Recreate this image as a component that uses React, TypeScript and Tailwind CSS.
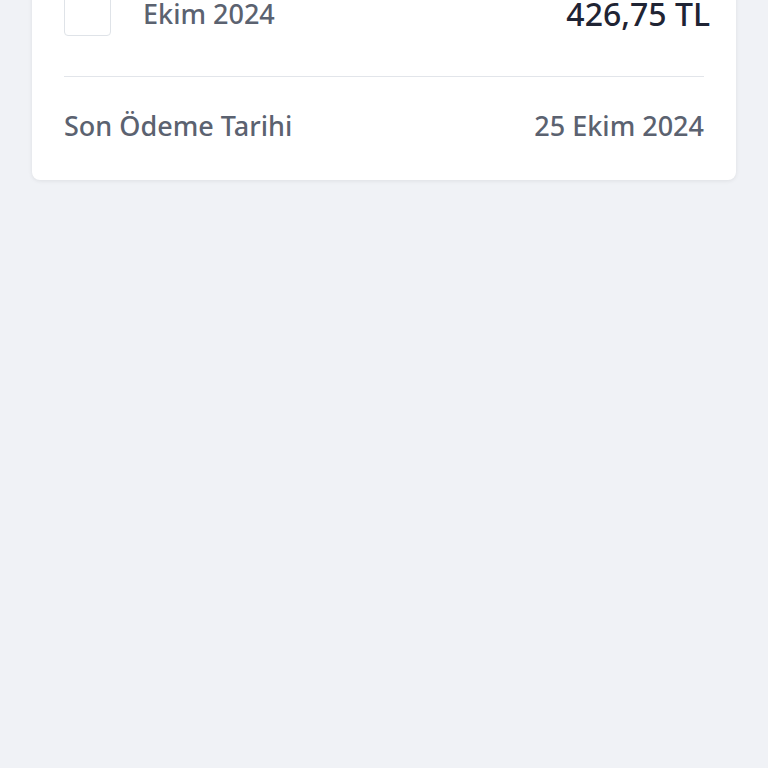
export default function App() {
  return (
    <div className="flex min-h-screen w-full flex-col bg-[#f0f2f6] px-8 font-['Noto_Sans',sans-serif]">
      <div className="-mt-[43px] rounded-lg bg-white shadow-[0_1px_4px_rgba(0,0,0,0.08)]">
        <div className="flex items-end pl-8 pr-[26px] pt-8 pb-10">
          <div className="h-[47px] w-[47px] rounded border border-[#dfe3e8]" />
          <div className="ml-8 mb-[9px] text-[27px] font-medium leading-[27px] text-[#5b6270]">Ekim 2024</div>
          <div className="ml-auto mb-[8px] text-[32px] font-medium leading-[28px] text-[#1f2434]">426,75 TL</div>
        </div>
        <div className="mx-8 h-px bg-[#e2e5ea]" />
        <div className="flex items-center justify-between px-8 pt-8 pb-[37px] text-[27px] font-medium leading-[34px] text-[#5b6270]">
          <span>Son Ödeme Tarihi</span>
          <span>25 Ekim 2024</span>
        </div>
      </div>
    </div>
  );
}
